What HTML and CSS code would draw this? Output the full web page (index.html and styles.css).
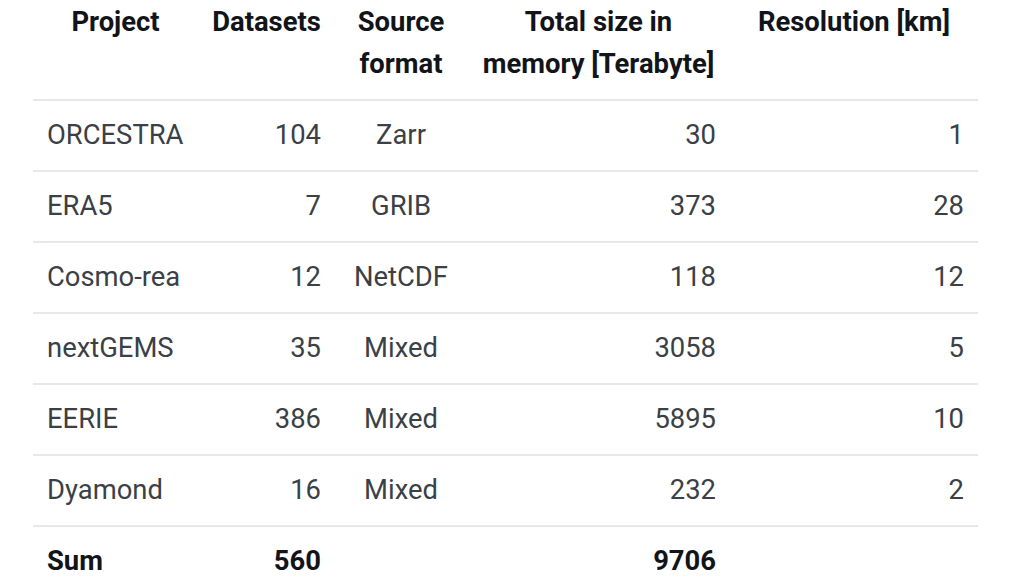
FILE: index.html
```html
<!DOCTYPE html>
<html lang="en">
<head>
<meta charset="utf-8">
<title>Datasets</title>
<link rel="stylesheet" href="styles.css">
</head>
<body>
<table class="data">
  <colgroup>
    <col class="c1"><col class="c2"><col class="c3"><col class="c4"><col class="c5">
  </colgroup>
  <thead>
    <tr>
      <th>Project</th>
      <th>Datasets</th>
      <th>Source<br>format</th>
      <th>Total size in<br>memory [Terabyte]</th>
      <th>Resolution [km]</th>
    </tr>
  </thead>
  <tbody>
    <tr><td class="l">ORCESTRA</td><td class="r">104</td><td class="c">Zarr</td><td class="r">30</td><td class="r">1</td></tr>
    <tr><td class="l">ERA5</td><td class="r">7</td><td class="c">GRIB</td><td class="r">373</td><td class="r">28</td></tr>
    <tr><td class="l">Cosmo-rea</td><td class="r">12</td><td class="c">NetCDF</td><td class="r">118</td><td class="r">12</td></tr>
    <tr><td class="l">nextGEMS</td><td class="r">35</td><td class="c">Mixed</td><td class="r">3058</td><td class="r">5</td></tr>
    <tr><td class="l">EERIE</td><td class="r">386</td><td class="c">Mixed</td><td class="r">5895</td><td class="r">10</td></tr>
    <tr><td class="l">Dyamond</td><td class="r">16</td><td class="c">Mixed</td><td class="r">232</td><td class="r">2</td></tr>
    <tr class="sum"><td class="l">Sum</td><td class="r">560</td><td class="c"></td><td class="r">9706</td><td class="r"></td></tr>
  </tbody>
</table>
</body>
</html>
```
FILE: styles.css
```css
html, body {
  margin: 0;
  padding: 0;
  background: #ffffff;
}
body {
  font-family: Roboto, "Liberation Sans", sans-serif;
  font-size: 27.4px;
  color: #3b3f46;
  padding-left: 33px;
}
.data {
  border-collapse: collapse;
  table-layout: fixed;
  width: 945px;
}
.c1 { width: 165px; }
.c2 { width: 137px; }
.c3 { width: 132px; }
.c4 { width: 263px; }
.c5 { width: 248px; }
.data th {
  font-weight: 700;
  color: #111418;
  line-height: 42px;
  padding: 1px 14px 14px;
  text-align: center;
  vertical-align: top;
}
.data td {
  line-height: 42px;
  padding: 13px 14px 14px;
  border-top: 2px solid #e6e8ec;
  white-space: nowrap;
}
.data td.l { text-align: left; }
.data td.r { text-align: right; }
.data td.c { text-align: center; }
.data tr.sum td {
  font-weight: 700;
  color: #111418;
}
```
